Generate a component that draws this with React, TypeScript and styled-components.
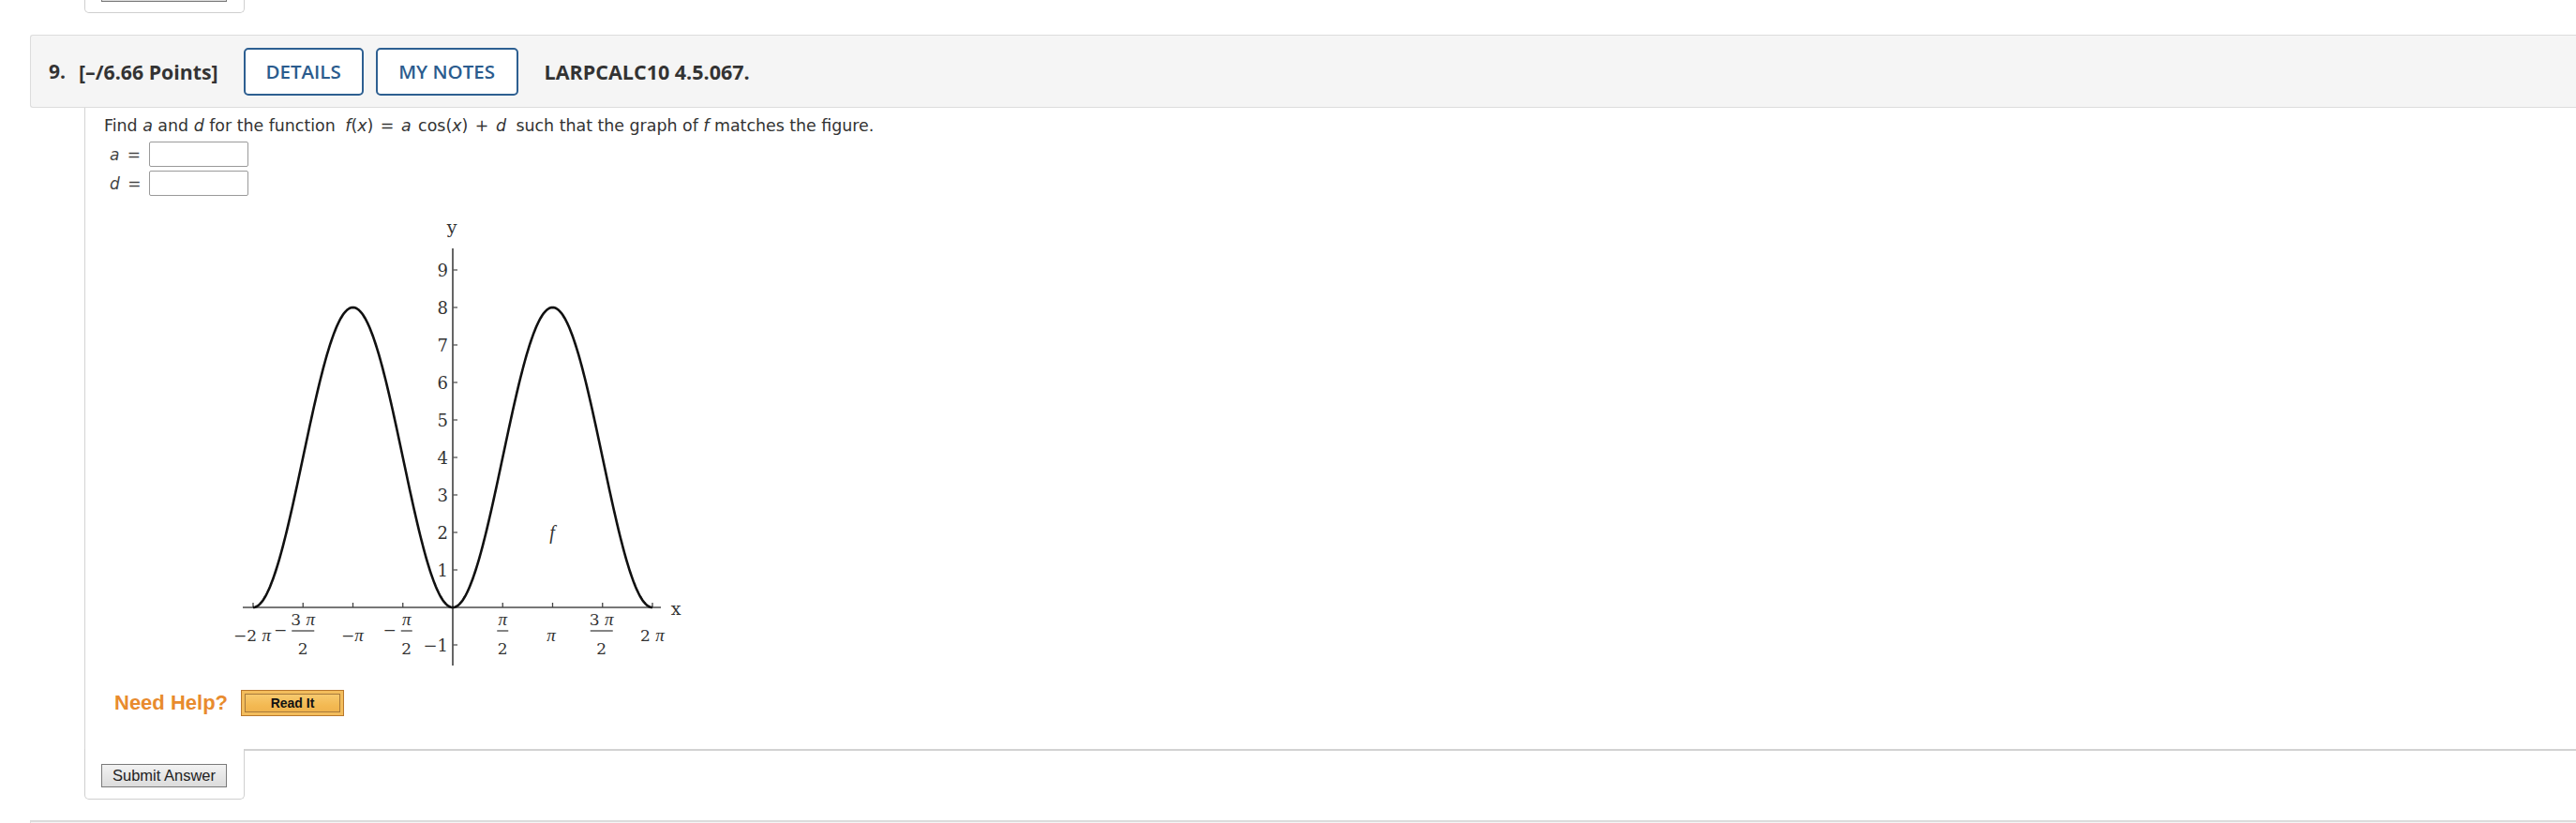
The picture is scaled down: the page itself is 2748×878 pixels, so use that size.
import React from "react";
import styled, { createGlobalStyle } from "styled-components";

const Global = createGlobalStyle`
  html, body { margin: 0; padding: 0; background: #fff; overflow: hidden; }
  body { width: 2748px; height: 878px; }
`;

const Page = styled.div`
  display: flex;
  flex-direction: column;
  width: 2748px;
`;

const PrevTab = styled.div`
  box-sizing: border-box;
  margin-left: 90px;
  width: 171px;
  height: 14px;
  border: 1px solid #cfcfcf;
  border-top: none;
  border-radius: 0 0 5px 5px;
  display: flex;
  align-items: flex-end;
  padding: 0 0 11px 17px;
`;

const GrayButton = styled.button`
  box-sizing: border-box;
  flex: none;
  height: 25px;
  width: 134px;
  padding: 0;
  border: 1px solid #7a7a7a;
  background: linear-gradient(#f2f2f2, #dcdcdc);
  font-family: "Liberation Sans", Arial, sans-serif;
  font-size: 16.5px;
  color: #222;
  line-height: 23px;
  cursor: pointer;
`;

const Question = styled.section`
  margin-top: 23px;
  display: flex;
  flex-direction: column;
`;

const Header = styled.div`
  box-sizing: border-box;
  margin-left: 32px;
  height: 78px;
  background: #f5f5f5;
  border: 1px solid #dcdcdc;
  border-right: none;
  border-radius: 3px 0 0 3px;
  display: flex;
  align-items: center;
  padding-left: 19px;
  font-family: "Open Sans", sans-serif;
  color: #333;
`;

const Num = styled.span`
  font-weight: 700;
  font-size: 21px;
  margin-right: 14px;
`;

const Points = styled.span`
  font-weight: 700;
  font-size: 21.3px;
  margin-right: 27px;
`;

const OutlineButton = styled.button<{ $w: number }>`
  box-sizing: border-box;
  width: ${(p) => p.$w}px;
  height: 51px;
  margin-right: 13px;
  border: 2px solid #2d5f91;
  border-radius: 5px;
  background: #fff;
  color: #2b5c8e;
  font-family: "Open Sans", sans-serif;
  font-weight: 600;
  font-size: 20.5px;
  padding: 0;
  cursor: pointer;
`;

const Code = styled.span`
  font-weight: 700;
  font-size: 21.5px;
  margin-left: 15px;
`;

const Body = styled.div`
  margin-left: 90px;
  border-left: 1px solid #d4d4d4;
  padding: 8px 0 35px 20px;
  display: flex;
  flex-direction: column;
  align-items: flex-start;
  font-family: "DejaVu Sans", Verdana, sans-serif;
  color: #333;
`;

const QText = styled.p`
  margin: 0;
  font-size: 17.4px;
  line-height: 23px;
`;

const Var = styled.i`
  font-style: italic;
`;

const MathSpan = styled.span`
  padding: 0 5px;
  word-spacing: 2px;
`;

const Fields = styled.div`
  margin-top: 5px;
  display: flex;
  flex-direction: column;
  gap: 4px;
`;

const FieldRow = styled.label`
  display: flex;
  align-items: center;
  font-size: 17px;
  color: #444;
`;

const FieldLabel = styled.span`
  width: 42px;
  padding-left: 6px;
  box-sizing: border-box;
  word-spacing: 3px;
`;

const Input = styled.input`
  box-sizing: border-box;
  width: 106px;
  height: 27px;
  border: 1px solid #9a9a9a;
  border-radius: 2px;
  margin: 0 0 0 6px;
  padding: 0 4px;
  background: #fff;
`;

const Figure = styled.svg`
  display: block;
  margin: 17px 0 0 119px;
`;

const HelpRow = styled.div`
  margin: 15px 0 0 11px;
  display: flex;
  align-items: center;
  gap: 14px;
`;

const HelpText = styled.span`
  font-family: "Liberation Sans", Arial, sans-serif;
  font-weight: 700;
  font-size: 22px;
  color: #e88b2e;
`;

const ReadIt = styled.button`
  box-sizing: border-box;
  width: 110px;
  height: 28px;
  border: 1px solid #b9782d;
  background: linear-gradient(#f8cf78, #f3b952 60%, #eeb04a);
  box-shadow: inset 0 0 0 3px #f3bd5c, inset 0 0 0 4px #a77a3c;
  font-family: "Liberation Sans", Arial, sans-serif;
  font-weight: 700;
  font-size: 14px;
  color: #111;
  padding: 0;
  cursor: pointer;
`;

const Footer = styled.div`
  margin-left: 90px;
  display: flex;
  align-items: flex-start;
`;

const SubmitTab = styled.div`
  box-sizing: border-box;
  width: 171px;
  height: 54px;
  border: 1px solid #cfcfcf;
  border-top: none;
  border-radius: 0 0 5px 5px;
  padding: 16px 0 0 17px;
`;

const FooterFill = styled.div`
  flex: 1;
  border-top: 2px solid #d2d2d2;
`;

const NextHeader = styled.div`
  margin: 22px 0 0 32px;
  height: 20px;
  background: #f5f5f5;
  border-top: 2px solid #dcdcdc;
  border-left: 1px solid #dcdcdc;
`;

/* ---------- graph ---------- */
const X0 = 253;
const Y0 = 422;
const PX_PER_HALF_PI = 53.25;
const PX_PER_UNIT = 40;
const xs = (t: number) => X0 + (t / (Math.PI / 2)) * PX_PER_HALF_PI;
const ys = (v: number) => Y0 - v * PX_PER_UNIT;

const curvePath = (() => {
  const pts: string[] = [];
  const n = 400;
  for (let i = 0; i <= n; i++) {
    const t = -2 * Math.PI + (4 * Math.PI * i) / n;
    const v = -4 * Math.cos(t) + 4;
    pts.push(`${i === 0 ? "M" : "L"}${xs(t).toFixed(2)},${ys(v).toFixed(2)}`);
  }
  return pts.join(" ");
})();

const serif = '"DejaVu Serif", "Liberation Serif", serif';
const piFont = '"Liberation Serif", serif';

const Pi: React.FC = () => (
  <tspan fontFamily={piFont} fontStyle="italic" fontSize={19}>
    π
  </tspan>
);

const Label: React.FC<{ x: number; y: number; children: React.ReactNode }> = ({ x, y, children }) => (
  <text x={x} y={y} textAnchor="middle" fontSize={17} fontFamily={serif} fill="#333">
    {children}
  </text>
);

const Frac: React.FC<{ cx: number; three?: boolean; bar: number; neg?: boolean }> = ({ cx, three, bar, neg }) => (
  <g>
    {neg && (
      <text x={cx - bar / 2 - 5} y={452} textAnchor="end" fontSize={17} fontFamily={serif} fill="#333">
        −
      </text>
    )}
    <Label x={cx} y={441}>
      {three ? "3 " : ""}
      <Pi />
    </Label>
    <line x1={cx - bar / 2} x2={cx + bar / 2} y1={447} y2={447} stroke="#333" strokeWidth={1.2} />
    <Label x={cx} y={472}>
      2
    </Label>
  </g>
);

const Graph: React.FC = () => {
  const yTicks = [-1, 1, 2, 3, 4, 5, 6, 7, 8, 9];
  const xTicks = [-4, -3, -2, -1, 1, 2, 3, 4];
  return (
    <Figure width={520} height={495} viewBox="0 0 520 495">
      <line x1={29} x2={475} y1={Y0} y2={Y0} stroke="#4a4a4a" strokeWidth={1.6} />
      <line x1={X0} x2={X0} y1={39} y2={484} stroke="#555" strokeWidth={1.8} />
      {yTicks.map((v) => (
        <g key={v}>
          <line x1={X0} x2={X0 + 5} y1={ys(v)} y2={ys(v)} stroke="#555" strokeWidth={1.3} />
          <text x={X0 - 5} y={ys(v) + 6.5} textAnchor="end" fontSize={18} fontFamily={serif} fill="#333">
            {v < 0 ? `−${-v}` : v}
          </text>
        </g>
      ))}
      {xTicks.map((k) => (
        <line key={k} x1={X0 + k * PX_PER_HALF_PI} x2={X0 + k * PX_PER_HALF_PI} y1={Y0} y2={Y0 - 5} stroke="#444" strokeWidth={1.3} />
      ))}
      <path d={curvePath} fill="none" stroke="#111" strokeWidth={2.6} strokeLinejoin="round" />
      <text x={252} y={23} textAnchor="middle" fontSize={19} fontFamily={serif} fill="#333">y</text>
      <text x={491} y={430} textAnchor="middle" fontSize={19} fontFamily={serif} fill="#333">x</text>
      <text x={359} y={349} textAnchor="middle" fontSize={20} fontStyle="italic" fontFamily={piFont} fill="#333">f</text>
      <Label x={39} y={458}>
        −2 <Pi />
      </Label>
      <Frac cx={X0 - 3 * PX_PER_HALF_PI} three bar={24} neg />
      <Label x={146} y={458}>
        −<Pi />
      </Label>
      <Frac cx={X0 - PX_PER_HALF_PI + 4} bar={12} neg />
      <Frac cx={X0 + PX_PER_HALF_PI} bar={12} />
      <Label x={358} y={458}>
        <Pi />
      </Label>
      <Frac cx={X0 + 3 * PX_PER_HALF_PI - 1} three bar={24} />
      <Label x={466} y={458}>
        2 <Pi />
      </Label>
    </Figure>
  );
};

export default function App() {
  return (
    <Page>
      <Global />
      <PrevTab>
        <GrayButton tabIndex={-1} aria-label="Submit Answer" />
      </PrevTab>
      <Question>
        <Header>
          <Num>9.</Num>
          <Points>[–/6.66 Points]</Points>
          <OutlineButton $w={128}>DETAILS</OutlineButton>
          <OutlineButton $w={152}>MY NOTES</OutlineButton>
          <Code>LARPCALC10 4.5.067.</Code>
        </Header>
        <Body>
          <QText>
            Find <Var>a</Var> and <Var>d</Var> for the function{" "}
            <MathSpan>
              <Var>f</Var>(<Var>x</Var>) = <Var>a</Var> cos(<Var>x</Var>) + <Var>d</Var>
            </MathSpan>{" "}
            such that the graph of <Var>f</Var> matches the figure.
          </QText>
          <Fields>
            <FieldRow>
              <FieldLabel>
                <Var>a</Var> =
              </FieldLabel>
              <Input type="text" />
            </FieldRow>
            <FieldRow>
              <FieldLabel>
                <Var>d</Var> =
              </FieldLabel>
              <Input type="text" />
            </FieldRow>
          </Fields>
          <Graph />
          <HelpRow>
            <HelpText>Need Help?</HelpText>
            <ReadIt>Read It</ReadIt>
          </HelpRow>
        </Body>
        <Footer>
          <SubmitTab>
            <GrayButton>Submit Answer</GrayButton>
          </SubmitTab>
          <FooterFill />
        </Footer>
      </Question>
      <NextHeader />
    </Page>
  );
}
